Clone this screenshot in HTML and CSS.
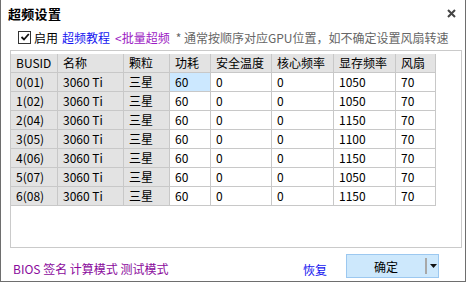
FILE: index.html
```html
<!DOCTYPE html>
<html lang="zh-CN">
<head>
<meta charset="utf-8">
<title>超频设置</title>
<link rel="stylesheet" href="styles.css">
</head>
<body>
<div class="window">
  <div class="titlebar">
    <span class="title">超频设置</span>
    <svg class="close" width="9" height="9" viewBox="0 0 9 9"><path d="M1 1 L8 8 M8 1 L1 8" stroke="#444" stroke-width="2"/></svg>
  </div>
  <div class="checkrow">
    <span class="checkbox"><svg width="10" height="10" viewBox="0 0 10 10"><path d="M1.5 5 L4 7.5 L8.8 2" fill="none" stroke="#111" stroke-width="1.8"/></svg></span>
    <span class="lbl">启用</span>
    <span class="link-blue">超频教程</span>
    <span class="link-purple">&lt;批量超频</span>
    <span class="note">* 通常按顺序对应GPU位置，如不确定设置风扇转速</span>
  </div>
  <div class="gridbox">
    <table class="grid">
      <colgroup>
        <col class="c1"><col class="c2"><col class="c3"><col class="c4"><col class="c5"><col class="c6"><col class="c7"><col class="c8">
      </colgroup>
      <thead>
        <tr><th>BUSID</th><th>名称</th><th>颗粒</th><th>功耗</th><th>安全温度</th><th>核心频率</th><th>显存频率</th><th>风扇</th></tr>
      </thead>
      <tbody>
        <tr><td class="ro">0(01)</td><td class="ro">3060 Ti</td><td class="ro">三星</td><td class="sel">60</td><td>0</td><td>0</td><td>1050</td><td>70</td></tr>
        <tr><td class="ro">1(02)</td><td class="ro">3060 Ti</td><td class="ro">三星</td><td>60</td><td>0</td><td>0</td><td>1050</td><td>70</td></tr>
        <tr><td class="ro">2(04)</td><td class="ro">3060 Ti</td><td class="ro">三星</td><td>60</td><td>0</td><td>0</td><td>1150</td><td>70</td></tr>
        <tr><td class="ro">3(05)</td><td class="ro">3060 Ti</td><td class="ro">三星</td><td>60</td><td>0</td><td>0</td><td>1100</td><td>70</td></tr>
        <tr><td class="ro">4(06)</td><td class="ro">3060 Ti</td><td class="ro">三星</td><td>60</td><td>0</td><td>0</td><td>1150</td><td>70</td></tr>
        <tr><td class="ro">5(07)</td><td class="ro">3060 Ti</td><td class="ro">三星</td><td>60</td><td>0</td><td>0</td><td>1050</td><td>70</td></tr>
        <tr><td class="ro">6(08)</td><td class="ro">3060 Ti</td><td class="ro">三星</td><td>60</td><td>0</td><td>0</td><td>1150</td><td>70</td></tr>
      </tbody>
    </table>
  </div>
  <div class="footer">
    <span class="modes">BIOS 签名 计算模式 测试模式</span>
    <span class="restore">恢复</span>
    <div class="okbtn">
      <span class="oklabel">确定</span>
      <span class="divider"></span>
      <svg class="arrow" width="7" height="4" viewBox="0 0 7 4"><path d="M0 0 H7 L3.5 4 Z" fill="#111"/></svg>
    </div>
  </div>
</div>
</body>
</html>
```

FILE: styles.css
```css
html, body {
  margin: 0;
  padding: 0;
  background: #ffffff;
}
body {
  width: 470px;
  height: 284px;
  font-family: "Noto Sans CJK SC", "Noto Sans", sans-serif;
  font-size: 12px;
  color: #000;
}
.window {
  width: 464px;
  height: 281px;
  border: 1px solid #6e6e6e;
  border-top: 0;
  display: flex;
  flex-direction: column;
  background: #fff;
}
.titlebar {
  height: 26px;
  display: flex;
  align-items: center;
  justify-content: space-between;
  padding: 0 9px 0 7px;
}
.title {
  font-weight: bold;
  font-size: 13px;
  letter-spacing: 0.3px;
}
.close {
  display: block;
}
.checkrow {
  height: 22px;
  display: flex;
  align-items: center;
  padding-left: 17px;
  white-space: nowrap;
}
.checkbox {
  width: 11px;
  height: 11px;
  border: 1px solid #333;
  display: flex;
  align-items: center;
  justify-content: center;
  margin-right: 3px;
}
.checkbox svg { display: block; }
.lbl { margin-right: 4px; }
.link-blue { color: #1515f0; margin-right: 5px; }
.link-purple { color: #9c1ac4; margin-right: 6px; }
.note { color: #666; }
.gridbox {
  margin: 2px 3px 0 9px;
  height: 193px;
  border: 1px solid #cacaca;
  padding-top: 3px;
}
.grid {
  border-collapse: collapse;
  table-layout: fixed;
  width: 425px;
  margin-left: -1px;
}
.c1 { width: 47px; }
.c2 { width: 66px; }
.c3 { width: 46px; }
.c4 { width: 41px; }
.c5 { width: 61px; }
.c6 { width: 62px; }
.c7 { width: 62px; }
.c8 { width: 40px; }
.grid th, .grid td {
  border: 1px solid #c8c8c8;
  height: 18px;
  padding: 0 0 0 5px;
  text-align: left;
  font-weight: normal;
  white-space: nowrap;
  line-height: 18px;
}
.grid thead th {
  background: #e3e3e3;
  border-top: 0;
}
.grid td.ro {
  background: #e3e3e3;
}
.grid td.sel {
  background: #cce8ff;
}
.footer {
  flex: 1;
  display: flex;
  align-items: center;
  padding: 3px 0 0 12px;
}
.modes {
  color: #8a0a9c;
  margin-top: 4px;
}
.restore {
  color: #1515f0;
  margin-left: auto;
  margin-right: 19px;
  margin-top: 6px;
}
.okbtn {
  width: 91px;
  height: 22px;
  border: 1px solid #9cc8f0;
  background: #cde8fc;
  display: flex;
  align-items: center;
  margin-right: 26px;
}
.oklabel {
  width: 78px;
  text-align: center;
}
.divider {
  width: 2px;
  height: 16px;
  background: #a8a8a8;
  margin-right: 3px;
}
.arrow { display: block; }
```
